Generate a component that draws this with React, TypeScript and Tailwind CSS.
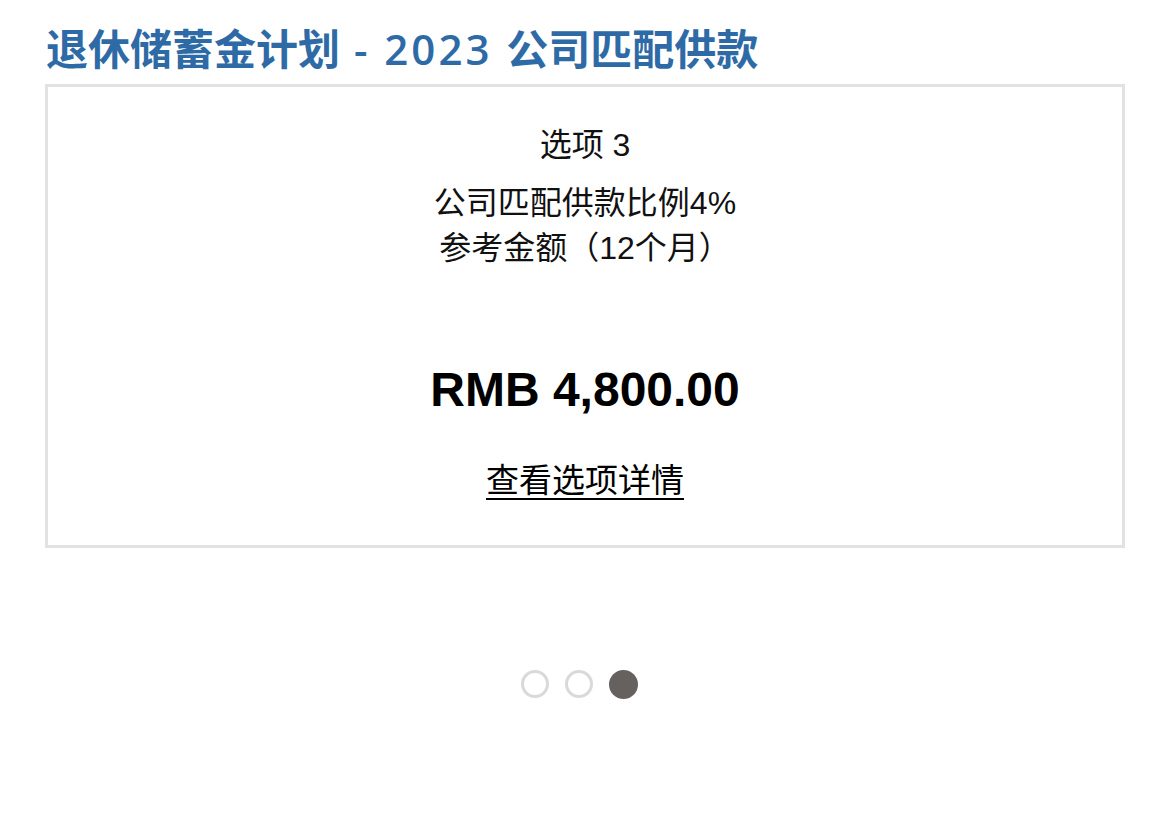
export default function App() {
  const font = { fontFamily: '"Liberation Sans", "Noto Sans CJK SC", sans-serif' };
  const titleFont = { fontFamily: '"Open Sans", "Noto Sans CJK SC", sans-serif' };
  return (
    <main className="w-[1170px] h-[823px] bg-white px-[45px] pt-[23px]" style={font}>
      {/* Heading */}
      <h1 className="text-[42px] leading-[52px] font-bold text-[#2e6ba6] mb-[9px] pl-[1px]" style={titleFont}>
        退休储蓄金计划<span className="font-semibold tracking-[3px]"> - 2023 </span>公司匹配供款
      </h1>

      {/* Option card */}
      <section className="h-[464px] border-[3px] border-[#e2e2e2] flex flex-col items-center pt-[38px] text-[#111]">
        <p className="text-[32px] leading-[40px]">选项 3</p>
        <p className="text-[32px] leading-[40px] mt-[18px]">公司匹配供款比例4%</p>
        <p className="text-[32px] leading-[40px] mt-[5px]">参考金额（12个月）</p>
        <p className="text-[48px] leading-[56px] font-bold text-black mt-[94px]">RMB 4,800.00</p>
        <a href="#" className="text-[33px] leading-[40px] mt-[43px] underline underline-offset-[6px] decoration-2 text-black">
          查看选项详情
        </a>
      </section>

      {/* Pager dots */}
      <div className="flex justify-center gap-[16px] mt-[122px] pr-[11px]">
        <span className="w-[28px] h-[28px] rounded-full border-[3px] border-[#d9d9d9]" />
        <span className="w-[28px] h-[28px] rounded-full border-[3px] border-[#d9d9d9]" />
        <span className="w-[29px] h-[29px] rounded-full bg-[#66615e]" />
      </div>
    </main>
  );
}
